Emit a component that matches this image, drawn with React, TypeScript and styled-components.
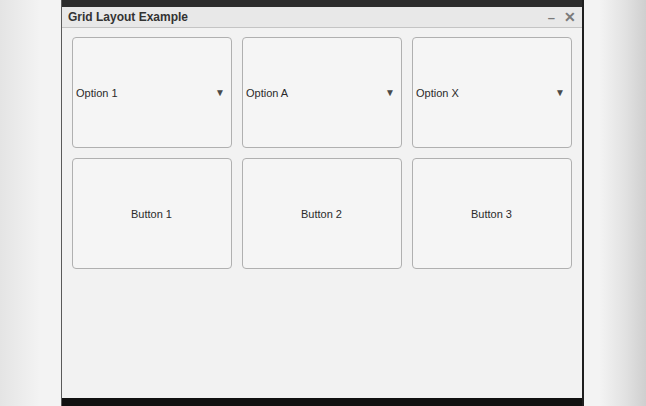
import React from "react";
import styled, { createGlobalStyle } from "styled-components";

const GlobalStyle = createGlobalStyle`
  html, body {
    margin: 0;
    padding: 0;
    width: 646px;
    height: 406px;
    overflow: hidden;
    font-family: "Liberation Sans", Arial, sans-serif;
  }
`;

const Page = styled.div`
  width: 646px;
  height: 406px;
  display: flex;
  padding-left: 61px;
  box-sizing: border-box;
  background: linear-gradient(
    to right,
    #e4e4e4 0px,
    #f3f3f3 40px,
    #f3f3f3 600px,
    #e2e2e2 625px,
    #cfcfcf 646px
  );
`;

const Window = styled.div`
  width: 523px;
  height: 406px;
  display: flex;
  flex-direction: column;
  border-left: 1px solid #5a5a5a;
  border-right: 2px solid #1e1e1e;
  box-sizing: border-box;
  background: #f2f2f2;
`;

const TopStrip = styled.div`
  height: 7px;
  background: #2c2c2c;
`;

const TitleBar = styled.div`
  height: 20px;
  display: flex;
  align-items: center;
  padding: 0 6px 0 6px;
  background: #e8e8e8;
  border-bottom: 1px solid #c4c4c4;
`;

const Title = styled.div`
  flex: 1;
  font-size: 12px;
  font-weight: bold;
  color: #333;
`;

const WinButton = styled.span<{ $size?: number }>`
  font-size: ${({ $size }) => $size ?? 13}px;
  font-weight: bold;
  color: #7a7a7a;
  margin-left: 9px;
  line-height: 1;
`;

const Body = styled.div`
  flex: 1;
  padding: 9px 10px;
  display: grid;
  grid-template-columns: repeat(3, 1fr);
  grid-template-rows: 111px 111px;
  gap: 10px;
  align-content: start;
`;

const Cell = styled.div<{ $center?: boolean }>`
  border: 1px solid #b0b0b0;
  border-radius: 4px;
  background: #f5f5f5;
  display: flex;
  align-items: center;
  justify-content: ${({ $center }) => ($center ? "center" : "space-between")};
  padding: 0 4px 0 3px;
  font-size: 11px;
  color: #2a2a2a;
`;

const Arrow = styled.span`
  font-size: 10px;
  color: #4a4a4a;
  margin-right: 2px;
`;

const BottomStrip = styled.div`
  height: 8px;
  background: #111;
`;

const options = ["Option 1", "Option A", "Option X"];
const buttons = ["Button 1", "Button 2", "Button 3"];

export default function App() {
  return (
    <>
      <GlobalStyle />
      <Page>
        <Window>
          <TopStrip />
          <TitleBar>
            <Title>Grid Layout Example</Title>
            <WinButton>–</WinButton>
            <WinButton $size={14}>✕</WinButton>
          </TitleBar>
          <Body>
            {options.map((o) => (
              <Cell key={o}>
                <span>{o}</span>
                <Arrow>▼</Arrow>
              </Cell>
            ))}
            {buttons.map((b) => (
              <Cell key={b} $center>
                {b}
              </Cell>
            ))}
          </Body>
          <BottomStrip />
        </Window>
      </Page>
    </>
  );
}
